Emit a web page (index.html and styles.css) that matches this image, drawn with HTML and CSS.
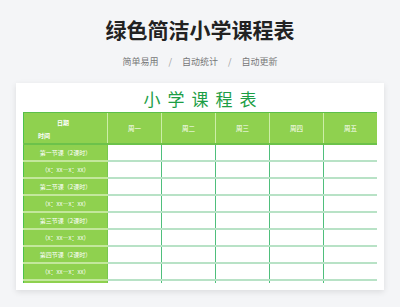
FILE: index.html
```html
<!DOCTYPE html>
<html lang="zh">
<head>
<meta charset="utf-8">
<link rel="stylesheet" href="styles.css">
</head>
<body>
<div class="hero">
  <h1 class="title">绿色简洁小学课程表</h1>
  <div class="sub"><span>简单易用</span><span class="sep">/</span><span>自动统计</span><span class="sep">/</span><span>自动更新</span></div>
</div>
<div class="card">
  <div class="ctitle">小学课程表</div>
  <div class="wrap">
    <table class="tt">
      <colgroup><col class="c0"><col class="cd"><col class="cd"><col class="cd"><col class="cd"><col class="cd"></colgroup>
      <thead>
        <tr>
          <th class="diag"><span class="d1">日期</span><span class="d2">时间</span></th>
          <th>周一</th><th>周二</th><th>周三</th><th>周四</th><th>周五</th>
        </tr>
      </thead>
      <tbody>
        <tr><td class="lab">第一节课（2课时）</td><td></td><td></td><td></td><td></td><td></td></tr>
        <tr><td class="lab">（x：xx—x：xx）</td><td></td><td></td><td></td><td></td><td></td></tr>
        <tr><td class="lab">第二节课（2课时）</td><td></td><td></td><td></td><td></td><td></td></tr>
        <tr><td class="lab">（x：xx—x：xx）</td><td></td><td></td><td></td><td></td><td></td></tr>
        <tr><td class="lab">第三节课（2课时）</td><td></td><td></td><td></td><td></td><td></td></tr>
        <tr><td class="lab">（x：xx—x：xx）</td><td></td><td></td><td></td><td></td><td></td></tr>
        <tr><td class="lab">第四节课（2课时）</td><td></td><td></td><td></td><td></td><td></td></tr>
        <tr><td class="lab">（x：xx—x：xx）</td><td></td><td></td><td></td><td></td><td></td></tr>
        <tr><td class="lab"></td><td></td><td></td><td></td><td></td><td></td></tr>
      </tbody>
    </table>
  </div>
</div>
</body>
</html>
```
FILE: styles.css
```css
* { box-sizing: border-box; }
html, body { margin: 0; padding: 0; }
body {
  width: 400px;
  height: 307px;
  overflow: hidden;
  background: #f4f5f7;
  font-family: "Noto Sans CJK SC", "Noto Sans", sans-serif;
}
.hero { padding-top: 15px; text-align: center; }
.title {
  margin: 0;
  font-size: 21px;
  line-height: 28px;
  font-weight: 700;
  color: #222;
}
.sub {
  margin-top: 12px;
  font-size: 9px;
  line-height: 14px;
  color: #777;
  display: flex;
  justify-content: center;
  gap: 10px;
}
.sep { color: #999; }
.card {
  margin: 14px 16px 0;
  height: 207px;
  background: #fff;
  padding: 0 7px 7px;
  box-shadow: 0 2px 6px rgba(0,0,0,0.10);
}
.ctitle {
  height: 29px;
  line-height: 31px;
  text-align: center;
  font-size: 17px;
  letter-spacing: 7px;
  padding-left: 7px;
  color: #1c9e45;
}
.wrap { height: 171px; overflow: hidden; }
.tt {
  width: 354px;
  border-collapse: collapse;
  table-layout: fixed;
  border-left: 1px solid #4cc24c;
  border-right: 1px solid #35b35a;
}
.c0 { width: 84px; }
.cd { width: 54px; }
.tt th {
  height: 31px;
  background: #8fd14f;
  color: #fff;
  font-size: 6.5px;
  font-weight: 400;
  border-top: 1px solid #5cbf4a;
  border-bottom: 2px solid #6cc24a;
  border-left: 1px solid #cdeea8;
  padding: 0;
}
.tt th:first-child { border-left: none; }
.diag {
  position: relative;
  background: linear-gradient(to top right, #8fd14f calc(50% - 0.6px), #c4e89a 50%, #8fd14f calc(50% + 0.6px));
}
.d1, .d2 {
  position: absolute;
  font-size: 6px;
  line-height: 7px;
  font-weight: 700;
}
.d1 { left: 33px; top: 6px; }
.d2 { left: 14px; top: 19px; }
.tt td {
  height: 17px;
  padding: 0;
  border-bottom: 2px solid #b8e2c6;
  border-left: 1px solid #4fbf7c;
}
.tt td.lab {
  background: #8fd14f;
  color: #fff;
  font-size: 6px;
  text-align: center;
  border-left: none;
  border-bottom: 2px solid #c3e79c;
  border-right: 1px solid #78c850;
  white-space: nowrap;
}
```
